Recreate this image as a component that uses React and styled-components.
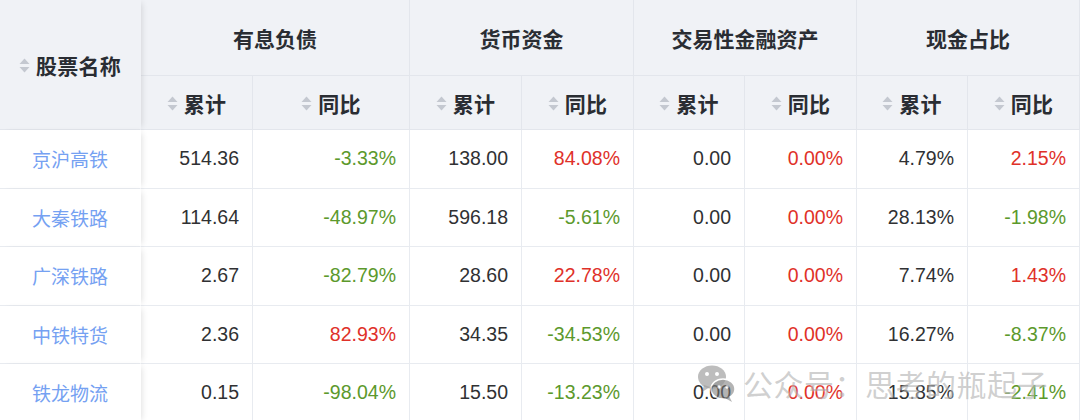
import React from "react";
import styled, { createGlobalStyle } from "styled-components";

const GlobalStyle = createGlobalStyle`
  html, body {
    margin: 0;
    padding: 0;
    background: #fff;
    overflow: hidden;
  }
  body {
    font-family: "Liberation Sans", "Noto Sans CJK SC", sans-serif;
  }
`;

const Wrapper = styled.div`
  position: relative;
  width: 1080px;
  height: 420px;
  overflow: hidden;
`;

const Table = styled.table`
  width: 1080px;
  table-layout: fixed;
  border-collapse: separate;
  border-spacing: 0;
`;

const Th = styled.th`
  background: #f0f2f6;
  color: #2a2d33;
  font-family: "Noto Sans CJK SC", sans-serif;
  font-size: 21px;
  font-weight: 700;
  text-align: center;
  padding: 0;
  height: ${(p) => p.$h || 54}px;
  border-right: 1px solid ${(p) => (p.$fixed ? "transparent" : "#e3e6ec")};
  border-bottom: 1px solid #e3e6ec;
  position: relative;
  ${(p) =>
    p.$fixed &&
    `
    z-index: 2;
    box-shadow: 4px 0 6px -3px rgba(0, 0, 0, 0.12);
  `}
`;

const HeadLabel = styled.span`
  display: inline-flex;
  align-items: center;
  gap: 6px;
  letter-spacing: 0.3px;
`;

const Td = styled.td`
  height: 57.5px;
  padding: 0 13px;
  border-right: 1px solid #e8ebf0;
  border-bottom: 1px solid #e8ebf0;
  font-size: 19.5px;
  color: ${(p) => p.$color || "#303133"};
  text-align: right;
  white-space: nowrap;
  background: #fff;
`;

const NameTd = styled(Td)`
  text-align: center;
  font-family: "Noto Sans CJK SC", sans-serif;
  font-size: 19px;
  color: #75a1f2;
  border-right: 1px solid transparent;
  position: relative;
  z-index: 2;
  box-shadow: 4px 0 6px -3px rgba(0, 0, 0, 0.12);
`;

const Watermark = styled.div`
  position: absolute;
  left: 697px;
  top: 361px;
  display: flex;
  align-items: center;
  gap: 6px;
  pointer-events: none;
  opacity: 0.75;
`;

const WatermarkText = styled.span`
  font-family: "Noto Sans CJK SC", sans-serif;
  font-size: 30px;
  color: rgba(140, 140, 140, 0.55);
  letter-spacing: 0.5px;
  text-shadow: 0 0 2px rgba(255, 255, 255, 0.9);
`;

function SortIcon() {
  return (
    <svg width="11" height="15" viewBox="0 0 11 15" aria-hidden="true">
      <path d="M5.5 0.5 L10.5 6 L0.5 6 Z" fill="#c4c8d0" />
      <path d="M5.5 14.5 L10.5 9 L0.5 9 Z" fill="#c4c8d0" />
    </svg>
  );
}

function WeChatIcon() {
  return (
    <svg width="40" height="40" viewBox="0 0 40 40" aria-hidden="true">
      <ellipse cx="15" cy="14" rx="14" ry="11.5" fill="rgba(130,130,130,0.7)" />
      <path d="M7 22 L5 29 L13 24 Z" fill="rgba(130,130,130,0.7)" />
      <circle cx="10" cy="11" r="2" fill="#fff" />
      <circle cx="20" cy="11" r="2" fill="#fff" />
      <ellipse cx="26" cy="26" rx="12" ry="10" fill="rgba(120,120,120,0.75)" stroke="#fff" strokeWidth="1.5" />
      <path d="M32 33 L35 39 L28 35 Z" fill="rgba(120,120,120,0.75)" />
      <circle cx="22" cy="24" r="1.7" fill="#fff" />
      <circle cx="30" cy="24" r="1.7" fill="#fff" />
    </svg>
  );
}

const GREEN = "#5c992c";
const RED = "#df3129";

const groups = ["有息负债", "货币资金", "交易性金融资产", "现金占比"];
const widths = [141, 112, 157, 112, 112, 111, 112, 111, 112];

const rows = [
  ["京沪高铁", "514.36", "-3.33%", "138.00", "84.08%", "0.00", "0.00%", "4.79%", "2.15%"],
  ["大秦铁路", "114.64", "-48.97%", "596.18", "-5.61%", "0.00", "0.00%", "28.13%", "-1.98%"],
  ["广深铁路", "2.67", "-82.79%", "28.60", "22.78%", "0.00", "0.00%", "7.74%", "1.43%"],
  ["中铁特货", "2.36", "82.93%", "34.35", "-34.53%", "0.00", "0.00%", "16.27%", "-8.37%"],
  ["铁龙物流", "0.15", "-98.04%", "15.50", "-13.23%", "0.00", "0.00%", "15.85%", "-2.41%"],
];

// 同比 columns (odd index) are coloured: red for growth, green for decline
function tone(value, idx) {
  if (idx % 2 === 0) return undefined;
  return value.startsWith("-") ? GREEN : RED;
}

export default function App() {
  return (
    <Wrapper>
      <GlobalStyle />
      <Table>
        <colgroup>
          {widths.map((w, i) => (
            <col key={i} style={{ width: w }} />
          ))}
        </colgroup>
        <thead>
          <tr>
            <Th rowSpan={2} $fixed $h={76}>
              <HeadLabel>
                <SortIcon />
                股票名称
              </HeadLabel>
            </Th>
            {groups.map((g) => (
              <Th key={g} colSpan={2} $h={75}>
                {g}
              </Th>
            ))}
          </tr>
          <tr>
            {groups.map((g) =>
              ["累计", "同比"].map((s) => (
                <Th key={g + s} $h={53}>
                  <HeadLabel>
                    <SortIcon />
                    {s}
                  </HeadLabel>
                </Th>
              ))
            )}
          </tr>
        </thead>
        <tbody>
          {rows.map(([name, ...vals]) => (
            <tr key={name}>
              <NameTd>{name}</NameTd>
              {vals.map((v, i) => (
                <Td key={i} $color={tone(v, i)}>
                  {v}
                </Td>
              ))}
            </tr>
          ))}
        </tbody>
      </Table>
      <Watermark>
        <WeChatIcon />
        <WatermarkText>公众号：思考的瓶起子</WatermarkText>
      </Watermark>
    </Wrapper>
  );
}
